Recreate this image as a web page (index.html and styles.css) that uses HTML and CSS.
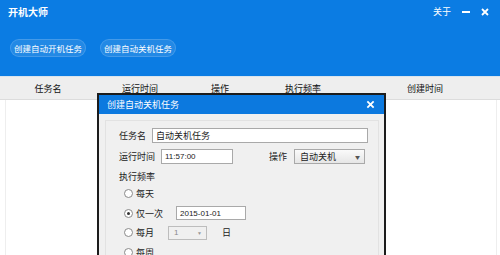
FILE: index.html
```html
<!DOCTYPE html>
<html lang="zh-CN">
  <head>
    <meta charset="UTF-8" />
    <meta name="viewport" content="width=device-width, initial-scale=1.0" />
    <title>开机大师</title>
    <link rel="stylesheet" href="styles.css">
  </head>
  <body>
    <div class="app">
      <div class="topbar">
        <div class="titlerow">
          <span class="apptitle">开机大师</span>
          <div class="winbtns">
            <span class="about">关于</span>
            <svg class="minbtn" width="10" height="10" viewBox="0 0 10 10"><rect x="1" y="4" width="8" height="2" fill="#fff"/></svg>
            <svg class="closebtn" width="10" height="10" viewBox="0 0 10 10"><path d="M2 2 L8 8 M8 2 L2 8" stroke="#fff" stroke-width="1.8"/></svg>
          </div>
        </div>
        <div class="tabs">
          <button class="pill">创建自动开机任务</button>
          <button class="pill">创建自动关机任务</button>
        </div>
      </div>
      <div class="thead">
        <span>任务名</span>
        <span>运行时间</span>
        <span>操作</span>
        <span>执行频率</span>
        <span>创建时间</span>
      </div>
      <div class="tbody"></div>
    </div>

    <div class="dialog">
      <div class="dlg-title">
        <span>创建自动关机任务</span>
        <svg width="9" height="9" viewBox="0 0 10 10"><path d="M1.5 1.5 L8.5 8.5 M8.5 1.5 L1.5 8.5" stroke="#fff" stroke-width="2"/></svg>
      </div>
      <div class="panel">
        <div class="row">
          <span class="lbl">任务名</span>
          <div class="field name">自动关机任务</div>
        </div>
        <div class="row">
          <span class="lbl">运行时间</span>
          <div class="field time num">11:57:00</div>
          <span class="lbl op">操作</span>
          <div class="field combo">自动关机<span class="arrow">▼</span></div>
        </div>
        <div class="group-title">执行频率</div>
        <div class="radios">
          <div class="radio"><span class="dot"></span>每天</div>
          <div class="radio"><span class="dot on"></span>仅一次<div class="field date num">2015-01-01</div></div>
          <div class="radio"><span class="dot"></span>每月<div class="field combo small off num">1<span class="arrow">▼</span></div><span class="day">日</span></div>
          <div class="radio"><span class="dot"></span>每周</div>
        </div>
      </div>
    </div>
  </body>
</html>
```

FILE: styles.css
```css
body {
  margin: 0;
  width: 500px;
  height: 255px;
  overflow: hidden;
  background-color: #fff;
  font-family: "Noto Sans CJK SC", "Liberation Sans", sans-serif;
  font-size: 9px;
  position: relative;
}
.app {
  height: 255px;
  display: flex;
  flex-direction: column;
}
.topbar {
  height: 76px;
  background-color: #0b7ce3;
  color: #fff;
  box-sizing: border-box;
  padding: 4px 10px 0 8px;
}
.titlerow {
  display: flex;
  justify-content: space-between;
  align-items: center;
  height: 15px;
}
.apptitle {
  font-size: 10px;
  font-weight: bold;
}
.winbtns {
  display: flex;
  align-items: center;
  gap: 9px;
}
.about {
  font-size: 9px;
  margin-right: 1px;
}
.tabs {
  display: flex;
  gap: 14px;
  margin-top: 20px;
  margin-left: 2px;
}
.pill {
  font-family: inherit;
  font-size: 8.5px;
  color: #fff;
  width: 76px;
  height: 18px;
  padding: 0;
  border: 1px solid rgba(255, 255, 255, 0.15);
  border-radius: 9px;
  background-color: rgba(255, 255, 255, 0.1);
}
.thead {
  height: 22px;
  border-top: 1px solid #d8e4ee;
  background-color: #eeeeee;
  border-bottom: 1px solid #dcdcdc;
  display: grid;
  grid-template-columns: 96px 88px 72px 94px 150px;
  align-items: center;
  text-align: center;
  color: #111;
}
.tbody {
  flex: 1;
  margin: 0 3px 0 5px;
  border-left: 1px solid #eeeeee;
  border-right: 1px solid #eeeeee;
}

/* dialog */
.dialog {
  position: absolute;
  left: 97px;
  top: 93px;
  width: 285px;
  height: 160px;
  border: 2px solid #1c1c1c;
  background-color: #f0f0f0;
  overflow: hidden;
}
.dlg-title {
  height: 19px;
  background-color: #0c79df;
  color: #fff;
  display: flex;
  justify-content: space-between;
  align-items: center;
  padding: 0 9px 0 8px;
}
.panel {
  margin: 6px 5px 0 6px;
  border: 1px solid #e2e2e2;
  border-bottom: none;
  padding: 7px 10px 0 13px;
  color: #222;
}
.row {
  display: flex;
  align-items: center;
  height: 15px;
  margin-bottom: 6px;
}
.lbl {
  margin-right: 6px;
}
.lbl.op {
  margin-left: 36px;
  margin-right: 7px;
}
.field {
  box-sizing: border-box;
  height: 15px;
  border: 1px solid #a9a9a9;
  background-color: #fff;
  padding-left: 3px;
  display: flex;
  align-items: center;
}
.num {
  font-family: "Liberation Sans", sans-serif;
  font-size: 8px;
}
.name {
  flex: 1;
}
.time {
  width: 72px;
}
.combo {
  width: 71px;
  background: linear-gradient(#fafafa, #e6e6e6);
  justify-content: space-between;
  padding: 0 4px 0 5px;
}
.arrow {
  font-size: 5px;
  color: #555;
}
.group-title {
  height: 14px;
  line-height: 14px;
}
.radios {
  display: flex;
  flex-direction: column;
  padding-left: 5px;
}
.radio {
  display: flex;
  align-items: center;
  height: 19.5px;
}
.dot {
  width: 7px;
  height: 7px;
  border: 1px solid #8a8a8a;
  border-radius: 50%;
  background-color: #fff;
  margin-right: 3px;
  position: relative;
}
.dot.on::after {
  content: "";
  position: absolute;
  left: 2px;
  top: 2px;
  width: 3px;
  height: 3px;
  border-radius: 50%;
  background-color: #333;
}
.date {
  width: 70px;
  height: 14px;
  margin-left: 13px;
}
.small {
  width: 39px;
  height: 14px;
  margin-left: 14px;
}
.off {
  color: #8a8a8a;
  background: #f0f0f0;
  border-color: #bdbdbd;
}
.off .arrow {
  color: #999;
}
.day {
  margin-left: 15px;
}
```
